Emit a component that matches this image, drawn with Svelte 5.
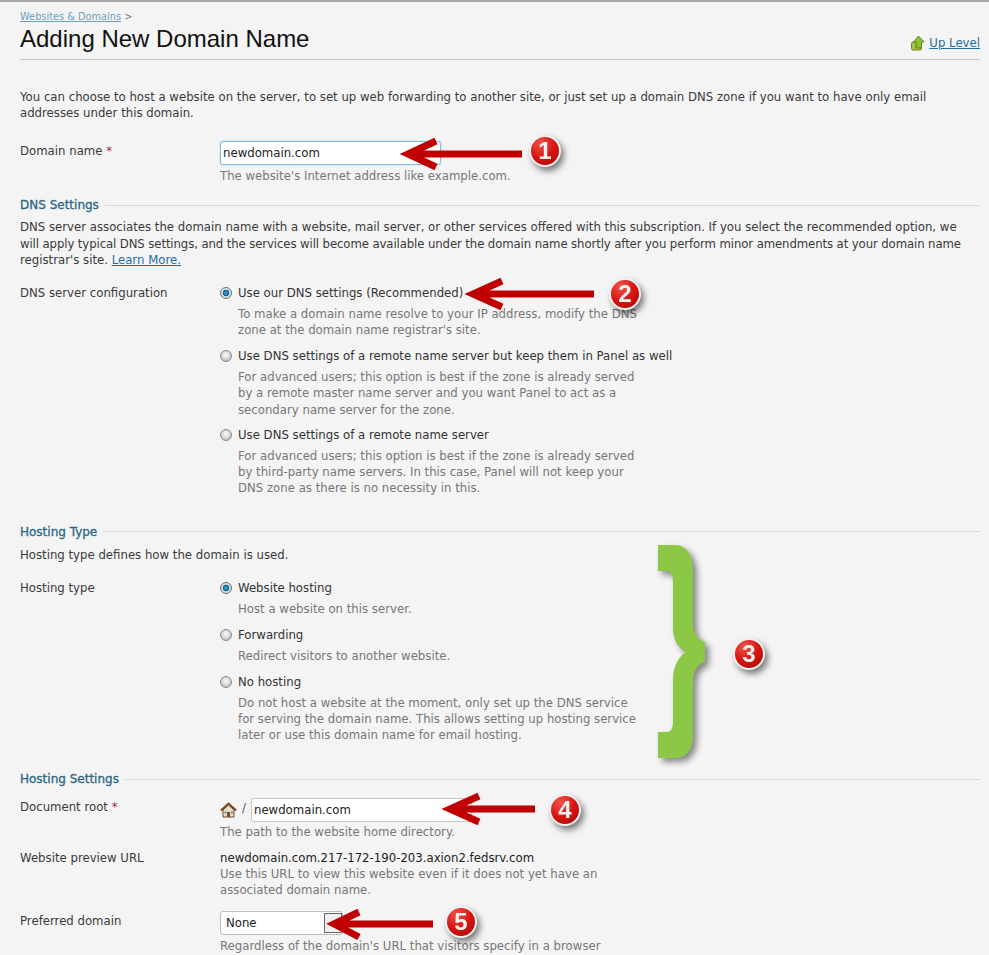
<div class="page">
  <header class="head">
    <div class="crumbs"><a href="#a">Websites &amp; Domains</a> <span>&gt;</span></div>
    <div class="titlebar">
      <h1>Adding New Domain Name</h1>
      <a class="up" href="#u">
        <svg width="14" height="16" viewBox="0 0 14 16"><rect x="0.5" y="7" width="10" height="8" rx="1.5" fill="#a9c23f" stroke="#6f8a23"/><path d="M7.5 1 L13 7 H10.5 V13 H5 V7 H2.5 Z" fill="#8fc031" stroke="#4f7a18" stroke-width="0.8"/></svg>
        <span>Up Level</span>
      </a>
    </div>
  </header>

  <p class="intro">You can choose to host a website on the server, to set up web forwarding to another site, or just set up a domain DNS zone if you want to have only email addresses under this domain.</p>

  <div class="row first">
    <div class="label">Domain name <b>*</b></div>
    <div class="field">
      <input class="text focus" value="newdomain.com" />
      <div class="desc">The website's Internet address like example.com.</div>
    </div>
  </div>

  <section class="dns">
    <h2><span>DNS Settings</span></h2>
    <p class="sec-text nowrap">DNS server associates the domain name with a website, mail server, or other services offered with this subscription. If you select the recommended option, we<br /><span class="squeeze">will apply typical DNS settings, and the services will become available under the domain name shortly after you perform minor amendments at your domain name</span><br />registrar's site. <a href="#l">Learn More.</a></p>
    <div class="row opts">
      <div class="label">DNS server configuration</div>
      <div class="field">
        <div class="opt"><i class="radio on"></i>Use our DNS settings (Recommended)</div>
        <div class="opt-desc">To make a domain name resolve to your IP address, modify the DNS<br />zone at the domain name registrar's site.</div>
        <div class="opt"><i class="radio"></i>Use DNS settings of a remote name server but keep them in Panel as well</div>
        <div class="opt-desc less">For advanced users; this option is best if the zone is already served<br />by a remote master name server and you want Panel to act as a<br />secondary name server for the zone.</div>
        <div class="opt"><i class="radio"></i>Use DNS settings of a remote name server</div>
        <div class="opt-desc">For advanced users; this option is best if the zone is already served<br />by third-party name servers. In this case, Panel will not keep your<br />DNS zone as there is no necessity in this.</div>
      </div>
    </div>
  </section>

  <section class="hosting">
    <h2><span>Hosting Type</span></h2>
    <p class="sec-text">Hosting type defines how the domain is used.</p>
    <div class="row opts">
      <div class="label">Hosting type</div>
      <div class="field">
        <div class="opt"><i class="radio on"></i>Website hosting</div>
        <div class="opt-desc">Host a website on this server.</div>
        <div class="opt"><i class="radio"></i>Forwarding</div>
        <div class="opt-desc less">Redirect visitors to another website.</div>
        <div class="opt"><i class="radio"></i>No hosting</div>
        <div class="opt-desc">Do not host a website at the moment, only set up the DNS service<br />for serving the domain name. This allows setting up hosting service<br />later or use this domain name for email hosting.</div>
      </div>
    </div>
  </section>

  <section class="settings">
    <h2><span>Hosting Settings</span></h2>
    <div class="row docroot">
      <div class="label">Document root <b>*</b></div>
      <div class="field">
        <div class="path">
          <svg width="17" height="16" viewBox="0 0 17 16"><path d="M3 8 V15 H14 V8 L8.5 3 Z" fill="#e9dcc3" stroke="#6b4a2c"/><path d="M0.8 8.5 L8.5 1.5 L16.2 8.5" fill="none" stroke="#7b4a22" stroke-width="2"/><rect x="7" y="10" width="3" height="5" fill="#7b4a22"/><rect x="4.5" y="9.5" width="2" height="2" fill="#5c8fb0"/><rect x="11" y="9.5" width="2" height="2" fill="#5c8fb0"/></svg>
          <span>/</span>
          <input class="text" value="newdomain.com" />
        </div>
        <div class="desc near">The path to the website home directory.</div>
      </div>
    </div>
    <div class="row preview">
      <div class="label">Website preview URL</div>
      <div class="field">
        <div class="value">newdomain.com.217-172-190-203.axion2.fedsrv.com</div>
        <div class="desc tight">Use this URL to view this website even if it does not yet have an<br />associated domain name.</div>
      </div>
    </div>
    <div class="row pref">
      <div class="label">Preferred domain</div>
      <div class="field">
        <div class="select">None<i class="drop"></i></div>
        <div class="desc">Regardless of the domain's URL that visitors specify in a browser</div>
      </div>
    </div>
  </section>

  <svg class="overlay" width="989" height="955" viewBox="0 0 989 955">
    <defs>
      <radialGradient id="ball" cx="35%" cy="25%" r="85%">
        <stop offset="0" stop-color="#f0544a" />
        <stop offset="0.55" stop-color="#d81410" />
        <stop offset="1" stop-color="#a80c08" />
      </radialGradient>
    </defs>

    <g class="arrow">
      <path d="M522 154 H408 M436 141 L408 154 L436 167" />
      <path d="M594 294 H473 M502 281 L473 294 L502 307" />
      <path d="M535 809 H450 M479 796 L450 809 L479 822" />
      <path d="M433 924 H334 M359 912 L334 924 L359 937" />
    </g>

    <path class="brace" d="M658 545 H675 C687 545 693 556 693 570 V622 C693 634 698 640 705 642 V662 C698 664 693 670 693 682 V735 C693 749 687 758 675 758 H658 V732 H667 C671 732 673 728 673 722 V680 C673 667 678 657 686 652 C678 648 673 640 673 628 V582 C673 575 671 571 667 571 H658 Z" />

    {#each badges as b}
      <g class="badge">
        <circle cx={b.x} cy={b.y} r="15" fill="url(#ball)" stroke="#f1f1f1" stroke-width="2" />
        <text x={b.x} y={b.y + 8} text-anchor="middle">{b.n}</text>
      </g>
    {/each}
  </svg>
</div>

<script>
  const badges = [
    { n: 1, x: 545, y: 151 },
    { n: 2, x: 625, y: 294 },
    { n: 3, x: 749, y: 654 },
    { n: 4, x: 565, y: 810 },
    { n: 5, x: 461, y: 922 }
  ];
</script>

<style>
  :global(body) {
    margin: 0;
    background: #f4f4f4;
  }
  .page {
    position: relative;
    width: 989px;
    height: 955px;
    overflow: hidden;
    box-sizing: border-box;
    padding: 0 9px 0 20px;
    border-top: 2px solid #a8a8a8;
    background: #f4f4f4;
    font: 11.72px/16px "DejaVu Sans", sans-serif;
    color: #3a3a3a;
  }
  a { color: #1c6ea8; }
  .head {
    border-bottom: 1px solid #c4c4c4;
    height: 58px;
    box-sizing: border-box;
    padding-top: 8px;
  }
  .crumbs { font-size: 9.8px; line-height: 14px; color: #777; }
  .crumbs a { color: #6d9fc0; }
  .titlebar { display: flex; justify-content: space-between; align-items: flex-end; margin-top: -1px; }
  h1 {
    margin: 0;
    font: 400 24px/31px "Liberation Sans", sans-serif;
    color: #111;
  }
  .up { display: flex; align-items: center; gap: 4px; margin-bottom: 3px; }
  .intro { margin: 29px 0 0; }
  .row { display: grid; grid-template-columns: 200px 1fr; }
  .first { margin-top: 20px; }
  .label { padding-top: 2px; }
  .label b { color: #b3265a; font-weight: 400; }
  .text {
    display: block;
    box-sizing: border-box;
    width: 221px;
    height: 24px;
    padding: 0 2px;
    font: 11.72px "DejaVu Sans", sans-serif;
    color: #222;
    background: #fff;
    border: 1px solid #b9b9b9;
    border-radius: 3px;
    outline: none;
  }
  .focus { border-color: #86bcd9; box-shadow: 0 0 2px #a5d2ea; }
  .desc { color: #777; margin-top: 3px; }
  .desc.near { margin-top: 2px; }
  .desc.tight { margin-top: 0; }
  h2 {
    display: flex;
    align-items: center;
    gap: 6px;
    margin: 0;
    font: 400 12px/16px "DejaVu Sans", sans-serif;
    color: #2a6684;
    -webkit-text-stroke: 0.3px #2a6684;
  }
  h2::after { content: ""; flex: 1; height: 1px; background: #d8d8d8; }
  .dns { margin-top: 13px; }
  .sec-text { margin: 6px 0 0; line-height: 16.5px; }
  .nowrap { white-space: nowrap; }
  .squeeze { letter-spacing: -0.11px; }
  .opts { margin-top: 16px; }
  .hosting .opts { margin-top: 17px; }
  .opts .label { padding-top: 0; }
  .opt { display: flex; align-items: center; gap: 6px; color: #333; }
  .opt-desc { color: #777; margin: 5px 0 10px 18px; line-height: 16.25px; }
  .opt-desc.less { margin-bottom: 9px; }
  .radio {
    box-sizing: border-box;
    flex: none;
    width: 12px;
    height: 12px;
    border-radius: 50%;
    border: 1px solid #8a8a8a;
    background: radial-gradient(circle at 50% 40%, #eee 0 2px, #bdbdbd 6px);
  }
  .radio.on {
    background: radial-gradient(circle at 50% 50%, #2a9ccc 0 1px, #0b5f8a 3px, #dcdcdc 3.6px);
    border-color: #55758a;
  }
  .hosting { margin-top: 17px; }
  .hosting .sec-text { margin-top: 7px; }
  .settings { margin-top: 18px; }
  .docroot { margin-top: 11px; }
  .docroot .label { padding-top: 1px; }
  .path { display: flex; align-items: center; gap: 5px; }
  .path span { margin-top: -4px; color: #555; }
  .path .text { border-color: #c6c6c6; }
  .preview { margin-top: 10px; }
  .preview .label { padding-top: 0; }
  .value { color: #222; }
  .pref { margin-top: 13px; }
  .select {
    position: relative;
    box-sizing: border-box;
    width: 123px;
    height: 24px;
    line-height: 23px;
    padding-left: 5px;
    background: #fff;
    border: 1px solid #bdbdbd;
    border-radius: 3px;
    color: #222;
  }
  .drop {
    position: absolute;
    right: 0;
    top: 1px;
    box-sizing: border-box;
    width: 18px;
    height: 20px;
    border: 1px solid #666;
    background: #f0f0f0;
  }
  .overlay {
    position: absolute;
    left: 0;
    top: -2px;
    pointer-events: none;
  }
  .arrow path {
    fill: none;
    stroke: #c00000;
    stroke-width: 7;
    stroke-miterlimit: 6;
  }
  .brace {
    fill: #8cc846;
    filter: drop-shadow(4px 4px 3px rgba(0, 0, 0, 0.45));
  }
  .badge { filter: drop-shadow(3px 4px 3px rgba(0, 0, 0, 0.5)); }
  .badge text {
    font: 700 24px "Liberation Sans", sans-serif;
    fill: #f2f2f2;
  }
</style>
